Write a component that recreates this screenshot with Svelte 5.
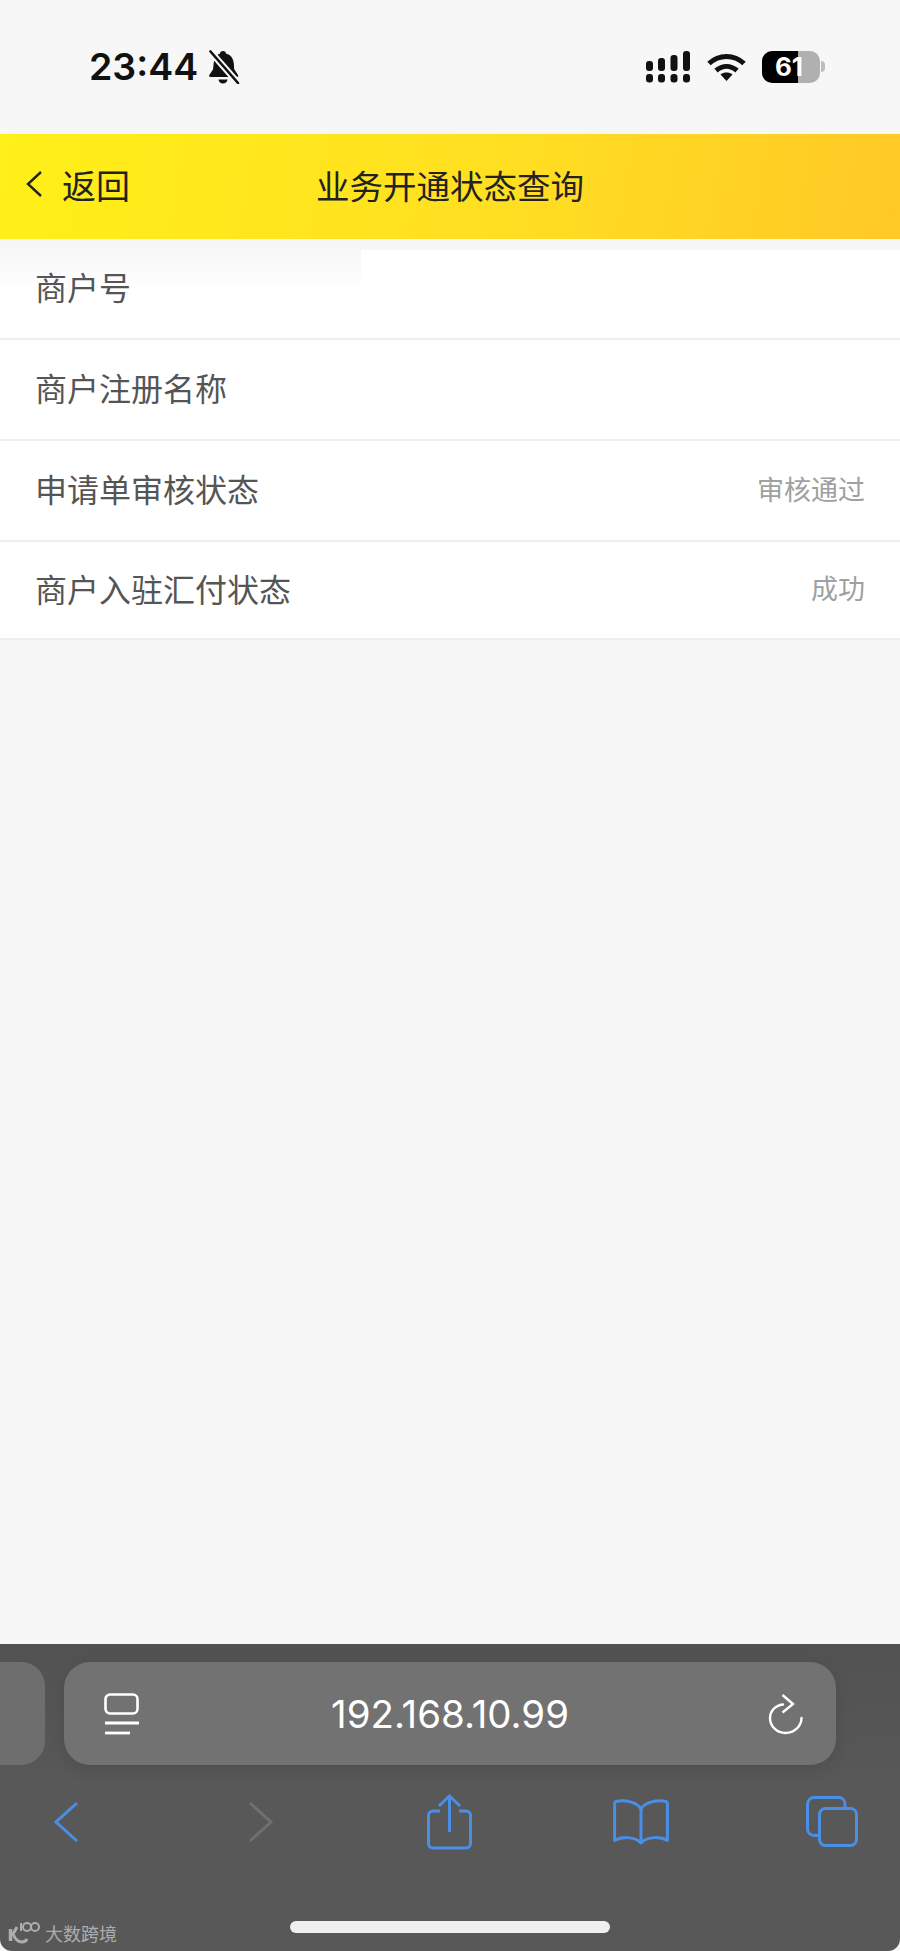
<script lang="ts">
  const rows = [
    { label: "商户号", value: "" },
    { label: "商户注册名称", value: "" },
    { label: "申请单审核状态", value: "审核通过" },
    { label: "商户入驻汇付状态", value: "成功" },
  ];
</script>

<div class="page">
  <header class="status">
    <div class="status-left">
      <span class="time">23:44</span>
      <svg class="bell" width="32" height="34" viewBox="0 0 32 34">
        <path d="M15 1c1.700 0 3 1.200 3.200 2.700 4.800 1.200 7.300 5 7.600 10l.4 5.600 3.800 5.700c.6 1 0 2-1.100 2H2.500c-1.200 0-1.800-1-1.200-2l3.700-5.400.7-6.300C6.200 8.300 8 4.900 11.800 3.700 12 2.200 13.300 1 15 1z" fill="#111" />
        <path d="M10.500 29.500h9c-.3 2.400-2.200 4-4.500 4s-4.200-1.600-4.500-4z" fill="#111" />
        <path d="M2 1l28 32" stroke="#f7f7f7" stroke-width="6.500" />
        <path d="M2.500 1.500l27.500 31.500" stroke="#111" stroke-width="2.600" stroke-linecap="round" />
      </svg>
    </div>
    <div class="status-right">
      <svg width="46" height="32" viewBox="0 0 46 32" fill="#111">
        <rect x="1" y="10" width="7" height="10" rx="3" />
        <rect x="13" y="7" width="7" height="13" rx="3" />
        <rect x="25.500" y="4" width="7" height="16" rx="3" />
        <rect x="38" y="0" width="7" height="20" rx="3" />
        <rect x="1" y="23" width="7" height="8.500" rx="3" />
        <rect x="13" y="23" width="7" height="8.500" rx="3" />
        <rect x="25.500" y="23" width="7" height="8.500" rx="3" />
        <rect x="38" y="23" width="7" height="8.500" rx="3" />
      </svg>
      <svg class="wifi" width="39" height="28" viewBox="0 0 39 28">
        <path d="M2 10.500C12 1 27 1 37 10.500" fill="none" stroke="#111" stroke-width="5" />
        <path d="M9 17.500c6.500-5.500 14.500-5.500 21 0" fill="none" stroke="#111" stroke-width="5" />
        <path d="M13.500 21.500c3.500-2.600 8.500-2.600 12 0L19.500 28z" fill="#111" />
      </svg>
      <div class="battery">
        <span class="battery-level">61</span>
        <i class="battery-cap"></i>
      </div>
    </div>
  </header>

  <nav class="navbar">
    <div class="back">
      <svg width="18" height="28" viewBox="0 0 18 28">
        <path d="M16 2L3 14l13 12" fill="none" stroke="#222" stroke-width="2.400" />
      </svg>
      <span>返回</span>
    </div>
    <h1>业务开通状态查询</h1>
  </nav>

  <section class="list">
    <div class="smudge"></div>
    {#each rows as row}
      <div class="row">
        <span class="label">{row.label}</span>
        {#if row.value}
          <span class="value">{row.value}</span>
        {/if}
      </div>
    {/each}
  </section>

  <div class="spacer"></div>

  <footer class="toolbar">
    <div class="address-row">
      <div class="tab-stub"></div>
      <div class="address">
        <svg width="36" height="42" viewBox="0 0 36 42" fill="none" stroke="#fff">
          <rect x="1.500" y="1.500" width="32" height="19" rx="4.500" stroke-width="2.600" />
          <path d="M1 30h34" stroke-width="2.800" />
          <path d="M1 40h25" stroke-width="2.800" />
        </svg>
        <span class="url">192.168.10.99</span>
        <svg class="reload" width="36" height="42" viewBox="0 0 36 42" fill="none" stroke="#fff" stroke-width="2.400">
          <path d="M15 11.500C6.500 12.500 2 18.500 2 25c0 8.500 7 15 15.500 15S33.500 33.500 33.500 25" stroke-linecap="round" />
          <path d="M14.500 2L25 11 14.500 19.500" />
        </svg>
      </div>
    </div>

    <div class="actions">
      <svg class="prev" width="26" height="42" viewBox="0 0 26 42">
        <path d="M24 2L3 21l21 19" fill="none" stroke="#4a8fe7" stroke-width="3" />
      </svg>
      <svg class="next" width="26" height="42" viewBox="0 0 26 42">
        <path d="M2 2l21 19L2 40" fill="none" stroke="#6f6f6f" stroke-width="3" />
      </svg>
      <svg width="46" height="56" viewBox="0 0 46 56" fill="none" stroke="#4a8fe7" stroke-width="3">
        <path d="M13 17H6c-2.500 0-4.500 2-4.500 4.500v28c0 2.500 2 4.500 4.500 4.500h33c2.500 0 4.500-2 4.500-4.500v-28c0-2.500-2-4.500-4.500-4.500h-7" />
        <path d="M22.500 38V3" />
        <path d="M12 12L22.500 2 33 12" />
      </svg>
      <svg width="56" height="46" viewBox="0 0 56 46" fill="none" stroke="#4a8fe7" stroke-width="3">
        <path d="M28 10C24 3 12 0.500 3 2.500 2 2.800 1.600 3.500 1.600 4.500v37c6-3.500 19-5 26.400 2.500 7.400-7.500 20.400-6 26.400-2.500v-37c0-1-.4-1.700-1.400-2C44 .5 32 3 28 10z" stroke-linejoin="round" />
        <path d="M28 10v33" />
      </svg>
      <svg width="52" height="52" viewBox="0 0 52 52" fill="none" stroke="#4a8fe7" stroke-width="3">
        <path d="M39 12V8c0-3.500-2.500-6.500-6.500-6.500H8C4.500 1.500 1.500 4.500 1.500 8v25c0 3.500 3 6.500 6.500 6.500h5" />
        <rect x="13.500" y="12.500" width="37" height="37" rx="6" />
      </svg>
    </div>

    <div class="home-bar"></div>

    <div class="watermark">
      <svg width="32" height="22" viewBox="0 0 32 22" fill="none" stroke="#adadad" stroke-width="2">
        <path d="M2.500 7v12" stroke-width="3.500" />
        <path d="M9 5L5 12c2 5 5 8 9 8 2.500 0 4-1 5-3" stroke-width="3" />
        <path d="M13 1v8" />
        <circle cx="19" cy="5" r="4" />
        <circle cx="27" cy="5" r="4" />
      </svg>
      <span>大数跨境</span>
    </div>
  </footer>
</div>

<style>
  :global(body) {
    margin: 0;
    background: #fff;
  }

  .page {
    display: flex;
    flex-direction: column;
    height: 1951px;
    overflow: hidden;
    background: #f7f7f7;
    font-family: "Noto Sans CJK SC", "Liberation Sans", sans-serif;
  }

  .status {
    display: flex;
    flex: none;
    align-items: center;
    justify-content: space-between;
    height: 134px;
    padding: 0 80px 0 89px;
  }

  .status-left {
    display: flex;
    align-items: center;
    gap: 10px;
  }

  .time {
    font-family: Inter, "Liberation Sans", sans-serif;
    font-size: 37.500px;
    font-weight: 600;
    line-height: 1;
    color: #111;
  }

  .status-right {
    display: flex;
    align-items: center;
    gap: 16px;
  }

  .battery {
    position: relative;
    width: 58px;
    height: 32px;
    border-radius: 10px;
    background: linear-gradient(to right, #000 36px, #b0b0b0 36px);
    text-align: center;
  }

  .battery-level {
    display: block;
    padding-right: 4px;
    font-family: Inter, "Liberation Sans", sans-serif;
    font-size: 26px;
    font-weight: 700;
    line-height: 32px;
    color: #fff;
  }

  .battery-cap {
    position: absolute;
    top: 10px;
    right: -5px;
    width: 4px;
    height: 11px;
    border-radius: 0 4px 4px 0;
    background: #bdbdbd;
  }

  .navbar {
    position: relative;
    display: flex;
    flex: none;
    align-items: center;
    justify-content: center;
    box-sizing: border-box;
    height: 105px;
    padding-bottom: 5px;
    background: linear-gradient(100deg, #fff018 0%, #ffdf22 55%, #ffc926 100%);
    color: #222;
  }

  .back {
    position: absolute;
    top: 0;
    bottom: 5px;
    left: 25px;
    display: flex;
    align-items: center;
    gap: 19px;
    font-size: 34px;
  }

  .navbar h1 {
    margin: 0;
    font-size: 33.500px;
    font-weight: 400;
  }

  .list {
    position: relative;
    flex: none;
  }

  .row {
    display: flex;
    align-items: center;
    justify-content: space-between;
    box-sizing: border-box;
    height: 101px;
    padding: 0 35px 5px 35px;
    border-bottom: 2px solid #eeeeee;
    background: #fff;
  }

  .row:last-of-type {
    height: 98px;
  }

  .label {
    position: relative;
    z-index: 1;
    font-size: 32px;
    color: #555;
  }

  .value {
    font-size: 27px;
    color: #a0a0a0;
  }

  .smudge {
    position: absolute;
    top: 0;
    left: 0;
    right: 0;
    z-index: 1;
    height: 11px;
    background: #f7f7f7;
  }

  .smudge::after {
    content: "";
    position: absolute;
    top: 11px;
    left: 0;
    width: 361px;
    height: 40px;
    background: linear-gradient(to bottom, #f7f7f7, #ffffff);
  }

  .spacer {
    flex: 1;
  }

  .toolbar {
    position: relative;
    flex: none;
    box-sizing: border-box;
    height: 307px;
    padding-top: 18px;
    border-radius: 0 0 12px 12px;
    background: linear-gradient(to bottom, #525252, #585858 45%);
  }

  .address-row {
    display: flex;
    gap: 19px;
  }

  .tab-stub {
    flex: none;
    width: 45px;
    height: 103px;
    border-radius: 0 24px 24px 0;
    background: #6e6e6e;
  }

  .address {
    display: grid;
    flex: none;
    grid-template-columns: 1fr auto 1fr;
    align-items: center;
    box-sizing: border-box;
    width: 772px;
    height: 103px;
    padding: 0 32px 0 40px;
    border-radius: 26px;
    background: #727272;
    box-shadow: 0 4px 16px rgba(0, 0, 0, 0.1);
  }

  .reload {
    justify-self: end;
  }

  .url {
    position: relative;
    left: -4px;
    font-family: Inter, "Liberation Sans", sans-serif;
    font-size: 38.400px;
    font-weight: 400;
    color: #fff;
  }

  .actions {
    display: grid;
    grid-template-columns: repeat(5, 191px);
    justify-content: center;
    justify-items: center;
    align-items: center;
    height: 56px;
    margin-top: 29px;
  }

  .prev {
    margin-right: 4px;
  }

  .next {
    margin-left: 4px;
  }

  .home-bar {
    position: absolute;
    left: 290px;
    bottom: 18px;
    width: 320px;
    height: 12px;
    border-radius: 6px;
    background: #efefef;
  }

  .watermark {
    position: absolute;
    left: 8px;
    bottom: 7px;
    display: flex;
    align-items: center;
    gap: 5px;
    font-size: 18px;
    line-height: 22px;
    color: #adadad;
  }
</style>
